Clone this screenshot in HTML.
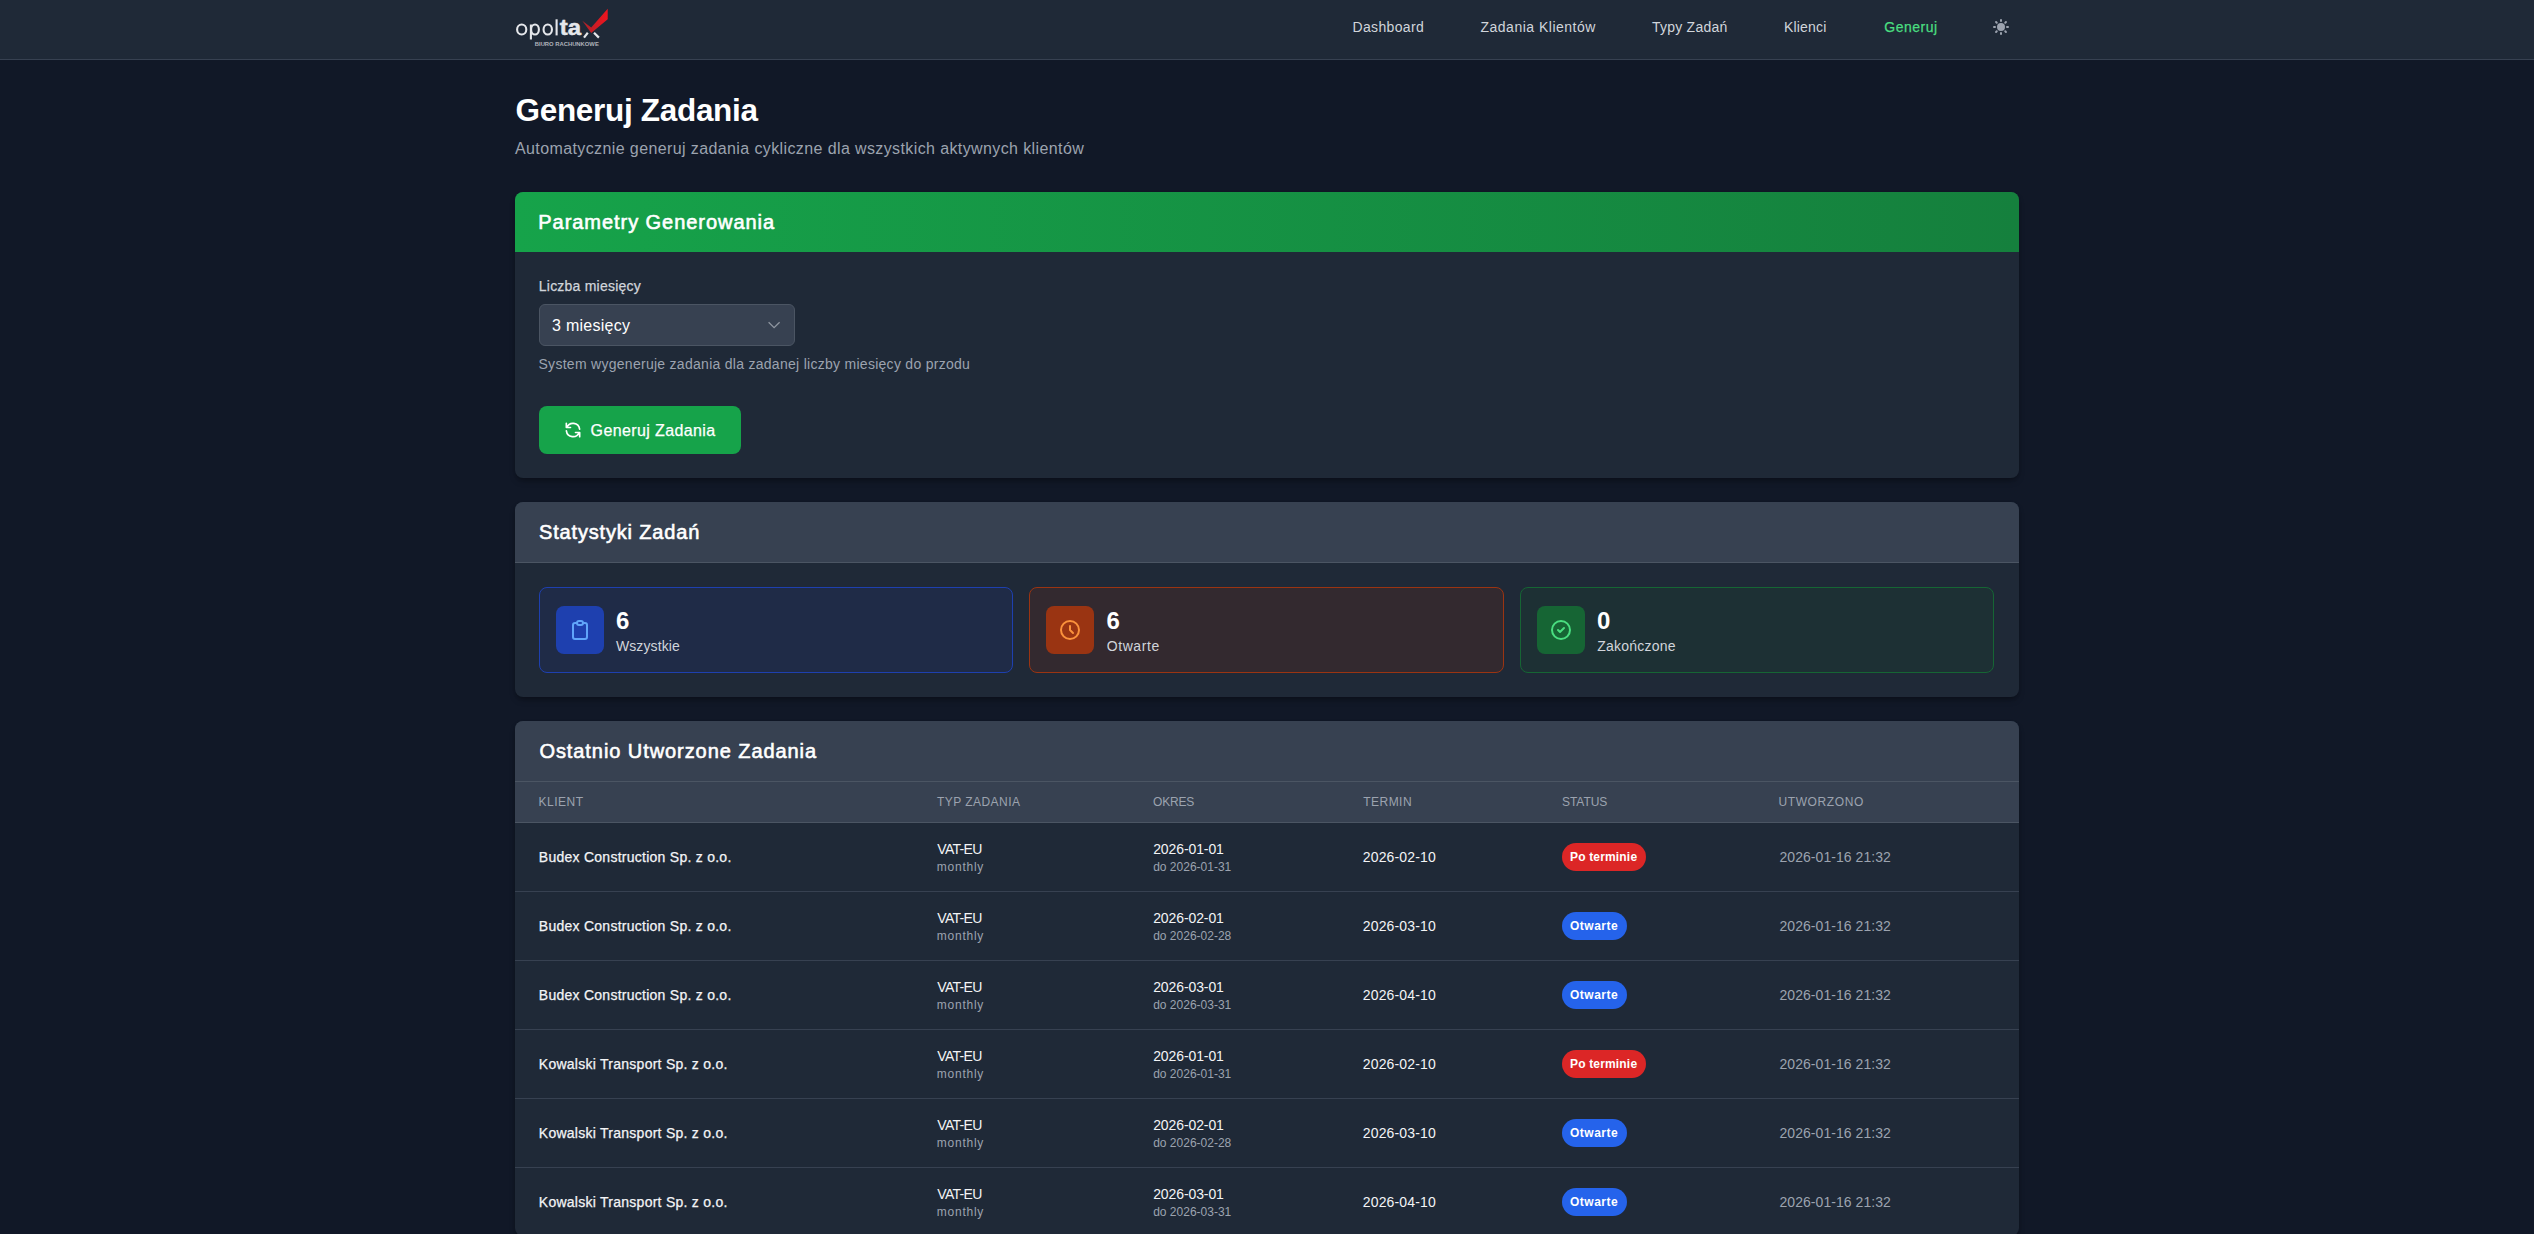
<!DOCTYPE html>
<html lang="pl">
<head>
<meta charset="utf-8">
<title>Generuj Zadania</title>
<style>
html,body{margin:0;padding:0}
body{width:2534px;height:1234px;overflow:hidden;background:#111827;font-family:"Liberation Sans",sans-serif;position:relative;color:#fff}
.a{position:absolute;white-space:nowrap;line-height:1}
.box{position:absolute;box-sizing:border-box}
.nav{font-size:14px;color:#d1d5db;top:20px}
.card{position:absolute;left:515px;width:1504px;background:#1f2937;border-radius:8px;overflow:hidden;box-shadow:0 4px 6px -1px rgba(0,0,0,.25),0 2px 4px -2px rgba(0,0,0,.25)}
.chead{position:absolute;left:0;top:0;width:1504px;height:60px;background:#374151;border-bottom:1px solid #4b5563}
.ctitle{font-size:20px;font-weight:400;color:#fff;-webkit-text-stroke:.6px #fff}
.stat{position:absolute;top:587px;height:86px;width:474px;border:1px solid;border-radius:8px;box-sizing:border-box}
.sicon{position:absolute;left:16px;top:18px;width:48px;height:48px;border-radius:8px}
.snum{font-size:24px;font-weight:700;color:#fff}
.slab{font-size:14px;color:#d1d5db}
.th{font-size:12px;color:#9ca3af;letter-spacing:.05em;top:795.85px}
.row{position:absolute;left:515px;width:1504px;height:68px;border-bottom:1px solid #374151}
.c14{font-size:14px;color:#f3f4f6}
.c12{font-size:12px;color:#9ca3af}
.g14{font-size:14px;color:#9ca3af}
.badge{position:absolute;left:1562px;height:28px;border-radius:14px;box-sizing:border-box;padding:0 8px;font-size:12px;font-weight:700;color:#fff;line-height:28px}
.red{background:#dc2626;width:84px}
.blue{background:#2563eb;width:65px}
</style>
</head>
<body>
<!-- HEADER -->
<div class="box" style="left:0;top:0;width:2534px;height:60px;background:#1f2937;border-bottom:1px solid #374151"></div>
<svg class="a" style="left:0;top:0" width="700" height="60" viewBox="0 0 700 60">
  <defs>
    <linearGradient id="lg" x1="0" y1="0" x2="1" y2="0">
      <stop offset="0" stop-color="#a8232a"/>
      <stop offset="1" stop-color="#f0141e"/>
    </linearGradient>
  </defs>
  <g fill="none" stroke="#e5e7eb" stroke-width="2.1">
    <ellipse cx="521.7" cy="29.55" rx="4.6" ry="5"/>
    <ellipse cx="535" cy="29.55" rx="3.9" ry="5"/>
    <line x1="530.9" y1="24.5" x2="530.9" y2="39.5"/>
    <ellipse cx="547.75" cy="29.55" rx="4.2" ry="5"/>
    <line x1="556.6" y1="19.3" x2="556.6" y2="35.4"/>
  </g>
  <text x="559.8" y="35.4" font-family="Liberation Sans" font-weight="700" font-size="22.5" fill="#e5e7eb" stroke="#e5e7eb" stroke-width=".5" textLength="21.3" lengthAdjust="spacingAndGlyphs">ta</text>
  <polygon points="582.3,20.7 591.2,27.5 607.7,8.8 607.7,19.3 591.2,33.1" fill="url(#lg)"/>
  <g stroke="#e5e7eb" stroke-width="2.2">
    <line x1="584" y1="37.6" x2="587.8" y2="32.8"/>
    <line x1="594" y1="32.8" x2="598.9" y2="37.6"/>
  </g>
  <text x="534.8" y="45.9" font-family="Liberation Sans" font-weight="700" font-size="5" fill="#aeb2ba" textLength="64" lengthAdjust="spacingAndGlyphs">BIURO RACHUNKOWE</text>
</svg>
<div class="a nav" style="left:1352.5px;letter-spacing:.35px">Dashboard</div>
<div class="a nav" style="left:1480.5px;letter-spacing:.5px">Zadania Klientów</div>
<div class="a nav" style="left:1652px;letter-spacing:.23px">Typy Zadań</div>
<div class="a nav" style="left:1784px;letter-spacing:.18px">Klienci</div>
<div class="a nav" style="left:1884.3px;letter-spacing:.52px;color:#4ade80;-webkit-text-stroke:.25px #4ade80">Generuj</div>
<svg class="a" style="left:1991px;top:17px" width="20" height="20" viewBox="0 0 20 20" fill="#9ca3af"><path fill-rule="evenodd" d="M10 2a1 1 0 011 1v1a1 1 0 11-2 0V3a1 1 0 011-1zm4 8a4 4 0 11-8 0 4 4 0 018 0zm-.464 4.95l.707.707a1 1 0 001.414-1.414l-.707-.707a1 1 0 00-1.414 1.414zm2.12-10.607a1 1 0 010 1.414l-.706.707a1 1 0 11-1.414-1.414l.707-.707a1 1 0 011.414 0zM17 11a1 1 0 100-2h-1a1 1 0 100 2h1zm-7 4a1 1 0 011 1v1a1 1 0 11-2 0v-1a1 1 0 011-1zM5.05 6.464A1 1 0 106.465 5.05l-.708-.707a1 1 0 00-1.414 1.414l.707.707zm1.414 8.486l-.707.707a1 1 0 01-1.414-1.414l.707-.707a1 1 0 011.414 1.414zM4 11a1 1 0 100-2H3a1 1 0 000 2h1z" clip-rule="evenodd"/></svg>

<!-- TITLE -->
<div class="a" style="left:515.5px;top:95.1px;font-size:31.5px;font-weight:700;color:#fff;letter-spacing:-.31px">Generuj Zadania</div>
<div class="a" style="left:515px;top:141.1px;font-size:16px;color:#9ca3af;letter-spacing:.39px">Automatycznie generuj zadania cykliczne dla wszystkich aktywnych klientów</div>

<!-- CARD 1 -->
<div class="card" style="top:192px;height:286px">
  <div style="position:absolute;left:0;top:0;width:1504px;height:60px;background:linear-gradient(90deg,#16a34a,#15803d)"></div>
</div>
<div class="a ctitle" style="left:538.3px;top:212.3px;letter-spacing:.95px">Parametry Generowania</div>
<div class="a" style="left:538.8px;top:278.95px;font-size:14px;color:#d1d5db;letter-spacing:.22px;-webkit-text-stroke:.25px #d1d5db">Liczba miesięcy</div>
<div class="box" style="left:539px;top:304px;width:256px;height:42px;background:#374151;border:1px solid #4b5563;border-radius:6px"></div>
<div class="a" style="left:552.1px;top:318.2px;font-size:16px;color:#fff;letter-spacing:.25px">3 miesięcy</div>
<svg class="a" style="left:760px;top:315px" width="28" height="20" viewBox="760 315 28 20"><polyline points="768.6,322.3 774.1,327.7 779.6,322.3" fill="none" stroke="#8f96a0" stroke-width="1.3"/></svg>
<div class="a" style="left:538.5px;top:356.85px;font-size:14px;color:#9ca3af;letter-spacing:.28px">System wygeneruje zadania dla zadanej liczby miesięcy do przodu</div>
<div class="box" style="left:539px;top:406px;width:202px;height:48px;background:#16a34a;border-radius:8px"></div>
<svg class="a" style="left:562.9px;top:419.9px" width="20" height="20" viewBox="0 0 24 24" fill="none" stroke="#fff" stroke-width="2" stroke-linecap="round" stroke-linejoin="round"><path d="M4 4v5h.582m15.356 2A8.001 8.001 0 004.582 9m0 0H9m11 11v-5h-.581m0 0a8.003 8.003 0 01-15.357-2m15.357 2H15"/></svg>
<div class="a" style="left:590.6px;top:422.6px;font-size:16px;color:#fff;letter-spacing:.38px;-webkit-text-stroke:.25px #fff">Generuj Zadania</div>

<!-- CARD 2 -->
<div class="card" style="top:502px;height:195px">
  <div class="chead"></div>
</div>
<div class="a ctitle" style="left:539px;top:522px;letter-spacing:.83px">Statystyki Zadań</div>
<div class="stat" style="left:539px;background:#1f2b47;border-color:#1e40af">
  <div class="sicon" style="background:#1e40af"></div>
</div>
<div class="stat" style="left:1029px;width:475px;background:#33292f;border-color:#9a3412">
  <div class="sicon" style="background:#9a3412"></div>
</div>
<div class="stat" style="left:1520px;background:#1d3034;border-color:#166534">
  <div class="sicon" style="background:#166534"></div>
</div>
<svg class="a" style="left:568px;top:618px" width="24" height="24" viewBox="0 0 24 24" fill="none" stroke="#60a5fa" stroke-width="2" stroke-linecap="round" stroke-linejoin="round"><path d="M9 5H7a2 2 0 00-2 2v12a2 2 0 002 2h10a2 2 0 002-2V7a2 2 0 00-2-2h-2M9 5a2 2 0 002 2h2a2 2 0 002-2M9 5a2 2 0 012-2h2a2 2 0 012 2"/></svg>
<svg class="a" style="left:1058px;top:618px" width="24" height="24" viewBox="0 0 24 24" fill="none" stroke="#fb923c" stroke-width="2" stroke-linecap="round" stroke-linejoin="round"><path d="M12 8v4l3 3m6-3a9 9 0 11-18 0 9 9 0 0118 0z"/></svg>
<svg class="a" style="left:1549px;top:618px" width="24" height="24" viewBox="0 0 24 24" fill="none" stroke="#4ade80" stroke-width="2" stroke-linecap="round" stroke-linejoin="round"><path d="M9 12l2 2 4-4m6 2a9 9 0 11-18 0 9 9 0 0118 0z"/></svg>
<div class="a snum" style="left:615.9px;top:609px">6</div>
<div class="a slab" style="left:615.9px;top:639.15px;letter-spacing:.12px">Wszystkie</div>
<div class="a snum" style="left:1106.5px;top:609px">6</div>
<div class="a slab" style="left:1106.7px;top:639.15px;letter-spacing:.58px">Otwarte</div>
<div class="a snum" style="left:1597px;top:609px">0</div>
<div class="a slab" style="left:1597.2px;top:639.15px;letter-spacing:.22px">Zakończone</div>

<!-- CARD 3 -->
<div class="card" style="top:721px;height:515px">
  <div class="chead"></div>
  <div style="position:absolute;left:0;top:61px;width:1504px;height:40px;background:#374151;border-bottom:1px solid #4b5563"></div>
</div>
<div class="a ctitle" style="left:539.4px;top:741.3px;letter-spacing:.93px">Ostatnio Utworzone Zadania</div>
<div class="a th" style="left:538.6px;letter-spacing:.5px">KLIENT</div>
<div class="a th" style="left:937px;letter-spacing:.45px">TYP ZADANIA</div>
<div class="a th" style="left:1153px;letter-spacing:-.2px">OKRES</div>
<div class="a th" style="left:1363.3px;letter-spacing:.45px">TERMIN</div>
<div class="a th" style="left:1562px;letter-spacing:-.05px">STATUS</div>
<div class="a th" style="left:1778.5px">UTWORZONO</div>
<!--ROWS-->
<div class="row" style="top:823px"></div>
<div class="a c14" style="left:538.8px;top:850.15px;letter-spacing:.26px;-webkit-text-stroke:.25px #f3f4f6">Budex Construction Sp. z o.o.</div>
<div class="a c14" style="left:937.3px;top:841.95px;letter-spacing:-.7px">VAT-EU</div>
<div class="a c12" style="left:936.8px;top:860.75px;letter-spacing:.75px">monthly</div>
<div class="a c14" style="left:1153.2px;top:841.95px;letter-spacing:-.1px">2026-01-01</div>
<div class="a c12" style="left:1153.2px;top:860.75px">do 2026-01-31</div>
<div class="a c14" style="left:1362.8px;top:850.15px;letter-spacing:.14px">2026-02-10</div>
<div class="badge red" style="top:843px;letter-spacing:.17px">Po terminie</div>
<div class="a g14" style="left:1779.5px;top:850.15px;letter-spacing:.05px">2026-01-16 21:32</div>
<div class="row" style="top:892px"></div>
<div class="a c14" style="left:538.8px;top:919.15px;letter-spacing:.26px;-webkit-text-stroke:.25px #f3f4f6">Budex Construction Sp. z o.o.</div>
<div class="a c14" style="left:937.3px;top:910.95px;letter-spacing:-.7px">VAT-EU</div>
<div class="a c12" style="left:936.8px;top:929.75px;letter-spacing:.75px">monthly</div>
<div class="a c14" style="left:1153.2px;top:910.95px;letter-spacing:-.1px">2026-02-01</div>
<div class="a c12" style="left:1153.2px;top:929.75px">do 2026-02-28</div>
<div class="a c14" style="left:1362.8px;top:919.15px;letter-spacing:.14px">2026-03-10</div>
<div class="badge blue" style="top:912px;letter-spacing:.5px">Otwarte</div>
<div class="a g14" style="left:1779.5px;top:919.15px;letter-spacing:.05px">2026-01-16 21:32</div>
<div class="row" style="top:961px"></div>
<div class="a c14" style="left:538.8px;top:988.15px;letter-spacing:.26px;-webkit-text-stroke:.25px #f3f4f6">Budex Construction Sp. z o.o.</div>
<div class="a c14" style="left:937.3px;top:979.95px;letter-spacing:-.7px">VAT-EU</div>
<div class="a c12" style="left:936.8px;top:998.75px;letter-spacing:.75px">monthly</div>
<div class="a c14" style="left:1153.2px;top:979.95px;letter-spacing:-.1px">2026-03-01</div>
<div class="a c12" style="left:1153.2px;top:998.75px">do 2026-03-31</div>
<div class="a c14" style="left:1362.8px;top:988.15px;letter-spacing:.14px">2026-04-10</div>
<div class="badge blue" style="top:981px;letter-spacing:.5px">Otwarte</div>
<div class="a g14" style="left:1779.5px;top:988.15px;letter-spacing:.05px">2026-01-16 21:32</div>
<div class="row" style="top:1030px"></div>
<div class="a c14" style="left:538.8px;top:1057.15px;letter-spacing:.26px;-webkit-text-stroke:.25px #f3f4f6">Kowalski Transport Sp. z o.o.</div>
<div class="a c14" style="left:937.3px;top:1048.95px;letter-spacing:-.7px">VAT-EU</div>
<div class="a c12" style="left:936.8px;top:1067.75px;letter-spacing:.75px">monthly</div>
<div class="a c14" style="left:1153.2px;top:1048.95px;letter-spacing:-.1px">2026-01-01</div>
<div class="a c12" style="left:1153.2px;top:1067.75px">do 2026-01-31</div>
<div class="a c14" style="left:1362.8px;top:1057.15px;letter-spacing:.14px">2026-02-10</div>
<div class="badge red" style="top:1050px;letter-spacing:.17px">Po terminie</div>
<div class="a g14" style="left:1779.5px;top:1057.15px;letter-spacing:.05px">2026-01-16 21:32</div>
<div class="row" style="top:1099px"></div>
<div class="a c14" style="left:538.8px;top:1126.15px;letter-spacing:.26px;-webkit-text-stroke:.25px #f3f4f6">Kowalski Transport Sp. z o.o.</div>
<div class="a c14" style="left:937.3px;top:1117.95px;letter-spacing:-.7px">VAT-EU</div>
<div class="a c12" style="left:936.8px;top:1136.75px;letter-spacing:.75px">monthly</div>
<div class="a c14" style="left:1153.2px;top:1117.95px;letter-spacing:-.1px">2026-02-01</div>
<div class="a c12" style="left:1153.2px;top:1136.75px">do 2026-02-28</div>
<div class="a c14" style="left:1362.8px;top:1126.15px;letter-spacing:.14px">2026-03-10</div>
<div class="badge blue" style="top:1119px;letter-spacing:.5px">Otwarte</div>
<div class="a g14" style="left:1779.5px;top:1126.15px;letter-spacing:.05px">2026-01-16 21:32</div>
<div class="row" style="top:1168px"></div>
<div class="a c14" style="left:538.8px;top:1195.15px;letter-spacing:.26px;-webkit-text-stroke:.25px #f3f4f6">Kowalski Transport Sp. z o.o.</div>
<div class="a c14" style="left:937.3px;top:1186.95px;letter-spacing:-.7px">VAT-EU</div>
<div class="a c12" style="left:936.8px;top:1205.75px;letter-spacing:.75px">monthly</div>
<div class="a c14" style="left:1153.2px;top:1186.95px;letter-spacing:-.1px">2026-03-01</div>
<div class="a c12" style="left:1153.2px;top:1205.75px">do 2026-03-31</div>
<div class="a c14" style="left:1362.8px;top:1195.15px;letter-spacing:.14px">2026-04-10</div>
<div class="badge blue" style="top:1188px;letter-spacing:.5px">Otwarte</div>
<div class="a g14" style="left:1779.5px;top:1195.15px;letter-spacing:.05px">2026-01-16 21:32</div>
<!--/ROWS-->
</body>
</html>
